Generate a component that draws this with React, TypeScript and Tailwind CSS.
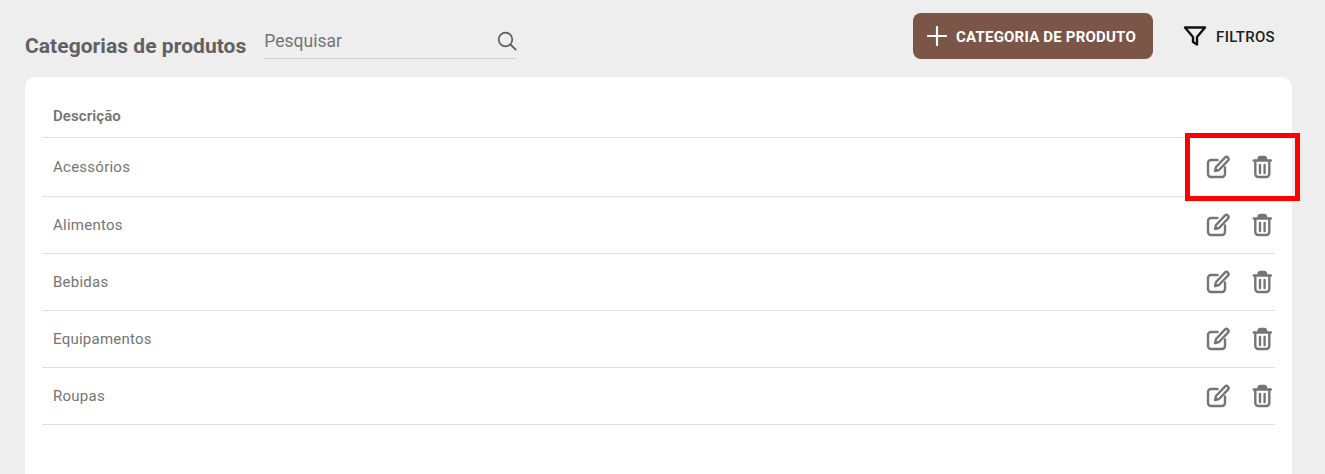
const categories = ['Acessórios', 'Alimentos', 'Bebidas', 'Equipamentos', 'Roupas'];

function EditIcon() {
  return (
    <svg width="24" height="24" viewBox="0 0 24 24" fill="none" stroke="#757575" strokeWidth="2.400" strokeLinecap="round" strokeLinejoin="round">
      <path d="M11.500 5H5a3 3 0 0 0-3 3v11a3 3 0 0 0 3 3h11a3 3 0 0 0 3-3v-6.500" />
      <path d="M18.900 2.600a2.100 2.100 0 0 1 3 3L13 15l-4 1 1-4z" />
    </svg>
  );
}

function TrashIcon() {
  return (
    <svg width="24" height="24" viewBox="0 0 24 24" fill="none" stroke="#757575" strokeWidth="2.400" strokeLinecap="round" strokeLinejoin="round">
      <path d="M3.800 5.500h17" />
      <path d="M8.500 4.500c0-1.700.8-2.500 2-2.500h3.600c1.200 0 2 .8 2 2.500z" fill="#757575" />
      <path d="M5.300 6V19a3 3 0 0 0 3 3h8a3 3 0 0 0 3-3V6" />
      <path d="M10 10v8M14.600 10v8" />
    </svg>
  );
}

export default function App() {
  return (
    <div className="relative h-[474px] overflow-hidden bg-[#eeeeee] px-[25px] pt-[13px] font-['Roboto',sans-serif]">
      <div className="mb-[18px] flex h-[46px] items-start justify-between">
        <div className="flex items-start">
          <h1 className="mt-[19px] text-[21px] leading-[28px] font-bold tracking-[0.05px] text-[#616161]">Categorias de produtos</h1>
          <div className="mt-[11px] ml-[18px] flex h-[35px] w-[253px] items-center justify-between border-b border-[#cfcfcf]">
            <span className="text-[17.500px] text-[#757575]">Pesquisar</span>
            <svg width="20" height="20" viewBox="0 0 20 20" fill="none" stroke="#616161" strokeWidth="1.800" strokeLinecap="round">
              <circle cx="8.500" cy="8.500" r="6.800" />
              <path d="M13.500 13.500 18.700 18.700" />
            </svg>
          </div>
        </div>
        <div className="flex items-center">
          <button className="flex h-[46px] w-[240px] items-center rounded-[8px] bg-[#7a5548] pl-[14px] text-white">
            <svg width="20" height="20" viewBox="0 0 20 20" stroke="#ffffff" strokeWidth="2.200" strokeLinecap="round">
              <path d="M10 1v18M1 10h18" />
            </svg>
            <span className="mt-[2px] ml-[9px] text-[15px] font-bold tracking-[0.2px]">CATEGORIA DE PRODUTO</span>
          </button>
          <button className="mr-[25px] ml-[30px] flex items-center text-[#212121]">
            <svg width="24" height="24" viewBox="0 0 24 24" fill="none" stroke="#111111" strokeWidth="2.400" strokeLinejoin="round">
              <path d="M2 3.500h20l-8 9.500v7.500l-4-2.500v-5z" />
            </svg>
            <span className="mt-[2px] ml-[9px] text-[15px] font-medium tracking-[0.3px]">FILTROS</span>
          </button>
        </div>
      </div>
      <div className="h-[500px] w-[1267px] rounded-t-[10px] bg-white px-[17px]">
        <div className="flex h-[61px] items-center border-b border-[#e0e0e0] pt-[19px] pl-[11px] text-[15px] font-semibold tracking-[0.1px] text-[#757575]">Descrição</div>
        {categories.map((name, i) => (
          <div key={name} className={`flex items-center justify-between border-b border-[#e0e0e0] pr-[1px] pl-[11px] ${i === 0 ? 'h-[59px]' : 'h-[57px]'}`}>
            <span className="text-[15px] tracking-[0.25px] text-[#757575]">{name}</span>
            <div className="flex items-center gap-[20px]">
              <EditIcon />
              <TrashIcon />
            </div>
          </div>
        ))}
      </div>
      <div className="absolute top-[133px] left-[1185px] h-[68px] w-[115px] border-[5px] border-[#ff0000]" />
    </div>
  );
}
